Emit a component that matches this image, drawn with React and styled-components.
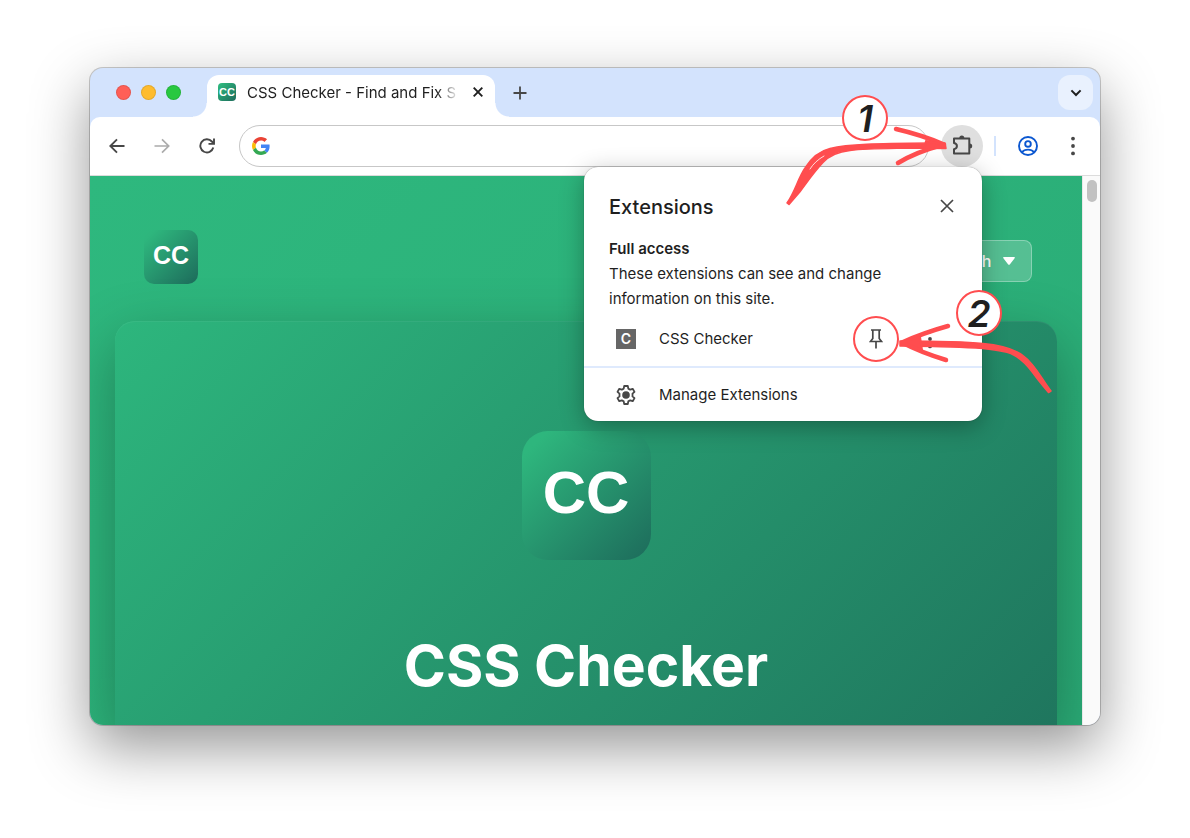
import styled, { createGlobalStyle } from "styled-components"

export default function App(){
    return(
        <>
            <GlobalStyle />
            <Desktop>
                <BrowserWindow>
                    <TabStrip />
                    <Toolbar />
                    <Viewport>
                        <Page />
                        <Scrollbar><Thumb /></Scrollbar>
                    </Viewport>
                    <ExtensionsMenu />
                    <Annotations />
                </BrowserWindow>
            </Desktop>
        </>
    )
}

function TabStrip(){
    return(
        <Strip>
            <Lights>
                <Light $color="#ff5f57" />
                <Light $color="#febc2e" />
                <Light $color="#28c840" />
            </Lights>
            <Tab>
                <Logo $size={18} $radius={4} $font={11} $lift={0}>CC</Logo>
                <TabTitle>CSS Checker - Find and Fix S</TabTitle>
                <IconButton $size={18} aria-label="Close tab">
                    <svg width="10" height="10" viewBox="0 0 10 10" stroke="#1f1f1f" strokeWidth="1.9">
                        <path d="M.7.7l8.6 8.6M9.3.7L.7 9.3" />
                    </svg>
                </IconButton>
            </Tab>
            <IconButton $size={30} aria-label="New tab">
                <svg width="14" height="14" viewBox="0 0 14 14" stroke="#474747" strokeWidth="1.8">
                    <path d="M7 .5v13M.5 7h13" />
                </svg>
            </IconButton>
            <SearchTabs aria-label="Search tabs">
                <svg width="12" height="8" viewBox="0 0 12 8" fill="none" stroke="#1f1f1f" strokeWidth="2">
                    <path d="M1.4 1.4L6 6l4.600-4.600" />
                </svg>
            </SearchTabs>
        </Strip>
    )
}

function Toolbar(){
    return(
        <Bar>
            <Nav>
                <IconButton $size={30} aria-label="Back">
                    <svg width="16" height="16" viewBox="0 0 16 16" fill="none" stroke="#474747" strokeWidth="1.9">
                        <path d="M15.500 8H2M8 1.300L1.300 8 8 14.700" />
                    </svg>
                </IconButton>
                <IconButton $size={30} aria-label="Forward">
                    <svg width="16" height="16" viewBox="0 0 16 16" fill="none" stroke="#ababab" strokeWidth="1.700">
                        <path d="M.5 8H14M8 1.300L14.700 8 8 14.700" />
                    </svg>
                </IconButton>
                <IconButton $size={30} aria-label="Reload">
                    <svg width="16" height="16" viewBox="0 0 16 16" fill="none" stroke="#474747" strokeWidth="1.9">
                        <path d="M14.300 9.600A6.600 6.600 0 1 1 12.900 3.500L14.800 5.500" />
                        <path d="M15 .6v5.300H9.500" />
                    </svg>
                </IconButton>
            </Nav>
            <Omnibox>
                <GoogleIcon />
                <input type="text" aria-label="Address and search bar" />
            </Omnibox>
            <Actions>
                <PuzzleButton aria-label="Extensions">
                    <svg width="22" height="22" viewBox="0 0 22 22" fill="none">
                        <path d="M3 3.500h15.300v15H3v-4.300c3.900-.8 3.900-5.500 0-6.300z" stroke="#474747" strokeWidth="2" strokeLinejoin="round" />
                        <path d="M8.300 3a2.500 2.500 0 0 1 5 0zM18.700 8.500a2.500 2.500 0 0 1 0 5z" fill="#474747" />
                    </svg>
                </PuzzleButton>
                <Divider />
                <IconButton $size={30} aria-label="Profile">
                    <svg width="20" height="20" viewBox="0 0 20 20" fill="none" stroke="#0b57d0" strokeWidth="1.900">
                        <circle cx="10" cy="10" r="9" />
                        <circle cx="10" cy="7.900" r="2.800" />
                        <path d="M3.800 16.300c3-3.600 9.400-3.600 12.400 0" />
                    </svg>
                </IconButton>
                <IconButton $size={30} aria-label="Menu"><Dots /></IconButton>
            </Actions>
        </Bar>
    )
}

function Page(){
    return(
        <Site>
            <SiteHeader>
                <Logo $size={54} $radius={10} $font={25} $lift={4}>CC</Logo>
                <Language>
                    <select aria-label="Language" defaultValue="en">
                        <option value="en">English</option>
                    </select>
                    <svg width="12" height="8" viewBox="0 0 12 8" fill="#fff">
                        <path d="M.8 0h10.400q1.200.2.4 1.200L6.800 7.400q-.8.900-1.600 0L.4 1.200Q-.4.2.8 0z" />
                    </svg>
                </Language>
            </SiteHeader>
            <Hero>
                <Logo $size={129} $radius={26} $font={60} $lift={6}>CC</Logo>
                <h1>CSS Checker</h1>
            </Hero>
        </Site>
    )
}

function ExtensionsMenu(){
    return(
        <Menu>
            <MenuHead>
                <h2>Extensions</h2>
                <IconButton $size={28} aria-label="Close">
                    <svg width="14" height="14" viewBox="0 0 14 14" stroke="#474747" strokeWidth="1.700">
                        <path d="M1 1l12 12M13 1L1 13" />
                    </svg>
                </IconButton>
            </MenuHead>
            <Access>
                <h3>Full access</h3>
                <p>These extensions can see and change information on this site.</p>
            </Access>
            <MenuRow>
                <MenuItem>
                    <ExtensionIcon>C</ExtensionIcon>
                    CSS Checker
                </MenuItem>
                <PinButton aria-label="Pin">
                    <svg width="14" height="20" viewBox="0 0 14 20" fill="none" stroke="#474747" strokeWidth="1.700">
                        <path d="M2 1h10M3.800 1v8.500L1.500 12.500h11L10.200 9.500V1M7 12.500V19.500" />
                    </svg>
                </PinButton>
                <IconButton $size={30} aria-label="More options"><Dots /></IconButton>
            </MenuRow>
            <MenuRow $line>
                <MenuItem>
                    <svg width="20" height="20" viewBox="0 0 20 20" fill="none">
                        <path
                            d="M8.200 1h3.600l.5 2.600 1.900 1.100 2.500-.9 1.800 3.100-2 1.700v2.800l2 1.700-1.800 3.100-2.500-.9-1.900 1.100-.5 2.600H8.200l-.5-2.600-1.900-1.100-2.500.9-1.800-3.100 2-1.700V8.600l-2-1.700 1.800-3.100 2.500.9 1.900-1.100z"
                            stroke="#474747" strokeWidth="1.800" strokeLinejoin="round"
                        />
                        <circle cx="10" cy="10" r="3.800" fill="#474747" />
                    </svg>
                    Manage Extensions
                </MenuItem>
            </MenuRow>
        </Menu>
    )
}

function Annotations(){
    return(
        <Overlay>
            <svg width="330" height="350" viewBox="770 68 330 350" fill="#ff4d4f" stroke="#ff4d4f" strokeLinecap="round" strokeLinejoin="round">
                <g>
                    <path
                        d="M787 203C795 192 798 178 805 168C812 157 820 151 830 148.600C850 143.500 880 143.600 945 143L946 148.500C923 148 870 148 850 150.500C836 152 829 156 823 162.500C814 172 808 181 800 191.700L789 204.500z"
                        strokeWidth="1.500"
                    />
                    <path d="M810 169Q815 161 824 156" stroke="#fff" strokeWidth=".8" fill="none" />
                    <path d="M896 129Q922 135 944 144.500Q916 152 898 163" strokeWidth="4.500" fill="none" />
                    <path d="M926 141L945 145L924 151z" strokeWidth="2" />
                </g>
                <g>
                    <path
                        d="M900 341C933 341 960 341 983 343.500C999 345 1013 348 1023 355.500C1035 364 1041 378 1051 391L1048.500 392.500C1043 386 1038 380 1033 373C1025 362 1015 353 1003 351.500C985 347 960 347.500 933 346.500L900 346z"
                        strokeWidth="1.500"
                    />
                    <path d="M948 326Q923 333 902 342.500Q920 352 946 360" strokeWidth="4.500" fill="none" />
                    <path d="M902 342L920 337L922 350z" strokeWidth="2" />
                </g>
            </svg>
            <Step $top={27} $right={212}>1</Step>
            <Step $top={222} $right={98}>2</Step>
        </Overlay>
    )
}

function Dots(){
    return(
        <svg width="4" height="20" viewBox="0 0 4 20" fill="#474747">
            <circle cx="2" cy="2.600" r="1.900" />
            <circle cx="2" cy="10" r="1.900" />
            <circle cx="2" cy="17.400" r="1.900" />
        </svg>
    )
}

function GoogleIcon(){
    return(
        <svg width="18" height="18" viewBox="0 0 48 48">
            <path fill="#EA4335" d="M24 9.500c3.540 0 6.710 1.220 9.210 3.600l6.850-6.850C35.900 2.380 30.470 0 24 0 14.620 0 6.510 5.380 2.560 13.220l7.980 6.190C12.430 13.720 17.740 9.500 24 9.500z" />
            <path fill="#4285F4" d="M46.980 24.550c0-1.570-.15-3.090-.38-4.550H24v9.020h12.940c-.58 2.960-2.260 5.480-4.780 7.180l7.730 6c4.510-4.180 7.090-10.360 7.090-17.650z" />
            <path fill="#FBBC05" d="M10.530 28.590c-.48-1.450-.76-2.990-.76-4.590s.27-3.140.76-4.590l-7.980-6.190C.92 16.460 0 20.120 0 24c0 3.880.92 7.540 2.560 10.780l7.970-6.190z" />
            <path fill="#34A853" d="M24 48c6.480 0 11.930-2.130 15.890-5.810l-7.730-6c-2.150 1.450-4.920 2.300-8.160 2.300-6.260 0-11.570-4.220-13.470-9.910l-7.980 6.190C6.510 42.620 14.620 48 24 48z" />
        </svg>
    )
}

const GlobalStyle = createGlobalStyle`
    *{
        box-sizing: border-box;
    }
    body{
        margin: 0;
        background: #fff;
        color: #1f1f1f;
        font-family: Inter, "Liberation Sans", sans-serif;
        font-size: 15px;
    }
    h1, h2, h3, p{
        margin: 0;
    }
    button, input, select{
        font: inherit;
        color: inherit;
        border: none;
        background: none;
        padding: 0;
    }
    svg{
        display: block;
        flex-shrink: 0;
    }
`

const Desktop = styled.main`
    min-height: 100vh;
    padding: 68px 90px 113px;
    display: flex;
    flex-direction: column;
    overflow: hidden;
`

const BrowserWindow = styled.div`
    position: relative;
    flex: 1;
    display: flex;
    flex-direction: column;
    border-radius: 13px;
    background: #d3e3fd;
    box-shadow: 0 0 0 1px rgba(0, 0, 0, 0.2), 0 22px 58px rgba(0, 0, 0, 0.42);
`

const Strip = styled.header`
    height: 49px;
    padding: 7px 7px 0 26px;
    display: flex;
    align-items: center;
`

const Lights = styled.div`
    display: flex;
    gap: 10px;
    margin-right: 26px;
    padding-bottom: 7px;
`

const Light = styled.span`
    width: 15px;
    height: 15px;
    border-radius: 50%;
    background: ${props => props.$color};
    box-shadow: inset 0 0 0 1px rgba(0, 0, 0, 0.1);
`

const Tab = styled.div`
    position: relative;
    width: 288px;
    height: 42px;
    padding: 0 11px 8px;
    display: flex;
    align-items: center;
    border-radius: 12px 12px 0 0;
    background: #fff;
    &::before, &::after{
        content: "";
        position: absolute;
        bottom: 0;
        width: 14px;
        height: 14px;
    }
    &::before{
        right: 100%;
        background: radial-gradient(circle at 0 0, transparent 13px, #fff 14px);
    }
    &::after{
        left: 100%;
        background: radial-gradient(circle at 100% 0, transparent 13px, #fff 14px);
    }
`

const TabTitle = styled.span`
    flex: 1;
    margin: 0 13px 0 11px;
    white-space: nowrap;
    mask-image: linear-gradient(to right, #000 190px, transparent 212px);
`

const IconButton = styled.button`
    width: ${props => props.$size}px;
    height: ${props => props.$size}px;
    display: flex;
    align-items: center;
    justify-content: center;
    flex-shrink: 0;
    ${Strip} > &{
        margin: 0 auto 7px 10px;
    }
`

const SearchTabs = styled.button`
    width: 35px;
    height: 35px;
    margin-bottom: 7px;
    display: flex;
    align-items: center;
    justify-content: center;
    border-radius: 12px;
    background: #e9f1fe;
`

const Bar = styled.div`
    height: 59px;
    padding: 0 12px 1px;
    display: flex;
    align-items: center;
    border-radius: 10px 10px 0 0;
    border-bottom: 1px solid #dcdcdc;
    background: #fff;
`

const Nav = styled.nav`
    display: flex;
    gap: 15px;
    margin-right: 17px;
`

const Omnibox = styled.label`
    flex: 1;
    height: 42px;
    padding: 0 12px;
    display: flex;
    align-items: center;
    gap: 12px;
    border: 1px solid #c7c7c7;
    border-radius: 21px;
    input{
        flex: 1;
        min-width: 0;
        outline: none;
    }
`

const Actions = styled.div`
    display: flex;
    align-items: center;
    gap: 15px;
    margin-left: 12px;
`

const PuzzleButton = styled.button`
    width: 42px;
    height: 42px;
    display: flex;
    align-items: center;
    justify-content: center;
    border-radius: 50%;
    background: #dfdfdf;
`

const Divider = styled.span`
    width: 2px;
    height: 20px;
    margin: 0 2px 0 -4px;
    background: #d3e3fd;
`

const Viewport = styled.div`
    flex: 1;
    display: flex;
    overflow: hidden;
    border-radius: 0 0 13px 13px;
`

const Scrollbar = styled.div`
    width: 18px;
    padding: 4px 3px 0 4px;
    border-left: 1px solid #e8e8e8;
    background: #fafafa;
`

const Thumb = styled.div`
    height: 22px;
    border-radius: 5px;
    background: #c1c1c1;
`

const Site = styled.div`
    flex: 1;
    min-width: 0;
    padding: 0 25px;
    display: flex;
    flex-direction: column;
    background: linear-gradient(135deg, #2eb87e, #2aab76);
    color: #fff;
    overflow: hidden;
`

const SiteHeader = styled.div`
    padding: 54px 25px 37px 29px;
    display: flex;
    justify-content: space-between;
    align-items: center;
`

const Logo = styled.span`
    width: ${props => props.$size}px;
    height: ${props => props.$size}px;
    padding-bottom: ${props => props.$lift}px;
    display: flex;
    align-items: center;
    justify-content: center;
    flex-shrink: 0;
    border-radius: ${props => props.$radius}px;
    background: linear-gradient(135deg, #2eb67d 10%, #1d6b5b);
    color: #fff;
    font-family: "Liberation Sans", sans-serif;
    font-size: ${props => props.$font}px;
    font-weight: 700;
    line-height: 1;
`

const Language = styled.div`
    padding-top: 8px;
    display: grid;
    align-items: center;
    justify-items: end;
    & > *{
        grid-area: 1 / 1;
    }
    select{
        appearance: none;
        width: 115px;
        height: 42px;
        padding: 0 40px 0 18px;
        border: 1px solid rgba(255, 255, 255, 0.3);
        border-radius: 8px;
        background: rgba(255, 255, 255, 0.2);
        font-size: 16px;
        font-weight: 500;
    }
    svg{
        margin-right: 17px;
        pointer-events: none;
    }
`

const Hero = styled.section`
    flex: 1;
    padding: 110px 20px 23px;
    display: flex;
    flex-direction: column;
    align-items: center;
    gap: 70px;
    border-radius: 20px 20px 0 0;
    background: linear-gradient(135deg, #2db67d, #1f765e);
    box-shadow: 0 20px 60px rgba(0, 0, 0, 0.3), inset 0 1px 1px rgba(255, 255, 255, 0.06);
    h1{
        font-size: 57px;
        line-height: 72px;
        font-weight: 700;
    }
`

const Menu = styled.div`
    position: absolute;
    top: 99px;
    right: 118px;
    width: 398px;
    padding-top: 25px;
    border-radius: 14px;
    background: #fff;
    box-shadow: 0 0 1px rgba(0, 0, 0, 0.5), 0 6px 24px rgba(0, 0, 0, 0.3);
`

const MenuHead = styled.div`
    padding: 0 21px 0 25px;
    display: flex;
    justify-content: space-between;
    h2{
        font-size: 20px;
        line-height: 30px;
        font-weight: 500;
    }
`

const Access = styled.div`
    padding: 14px 80px 0 25px;
    line-height: 25px;
    h3{
        font-size: 15px;
        font-weight: 600;
    }
`

const MenuRow = styled.div`
    height: 55px;
    padding: 0 37px 0 32px;
    display: flex;
    align-items: center;
    border-top: ${props => props.$line ? "2px solid #dfeafd" : "none"};
`

const MenuItem = styled.button`
    flex: 1;
    display: flex;
    align-items: center;
    gap: 23px;
    text-align: left;
`

const ExtensionIcon = styled.span`
    width: 20px;
    height: 20px;
    display: flex;
    align-items: center;
    justify-content: center;
    background: #666;
    color: #fff;
    font-size: 14px;
    font-weight: 600;
`

const PinButton = styled.button`
    width: 46px;
    height: 46px;
    margin-right: 16px;
    display: flex;
    align-items: center;
    justify-content: center;
    border: 2px solid #ff4d4f;
    border-radius: 50%;
`

const Overlay = styled.div`
    position: absolute;
    top: 0;
    right: 0;
    pointer-events: none;
`

const Step = styled.span`
    position: absolute;
    top: ${props => props.$top}px;
    right: ${props => props.$right}px;
    width: 46px;
    height: 46px;
    display: flex;
    align-items: center;
    justify-content: center;
    border: 2px solid #ff4d4f;
    border-radius: 50%;
    background: #fff;
    font-size: 37px;
    font-style: italic;
    font-weight: 600;
    line-height: 1;
`
